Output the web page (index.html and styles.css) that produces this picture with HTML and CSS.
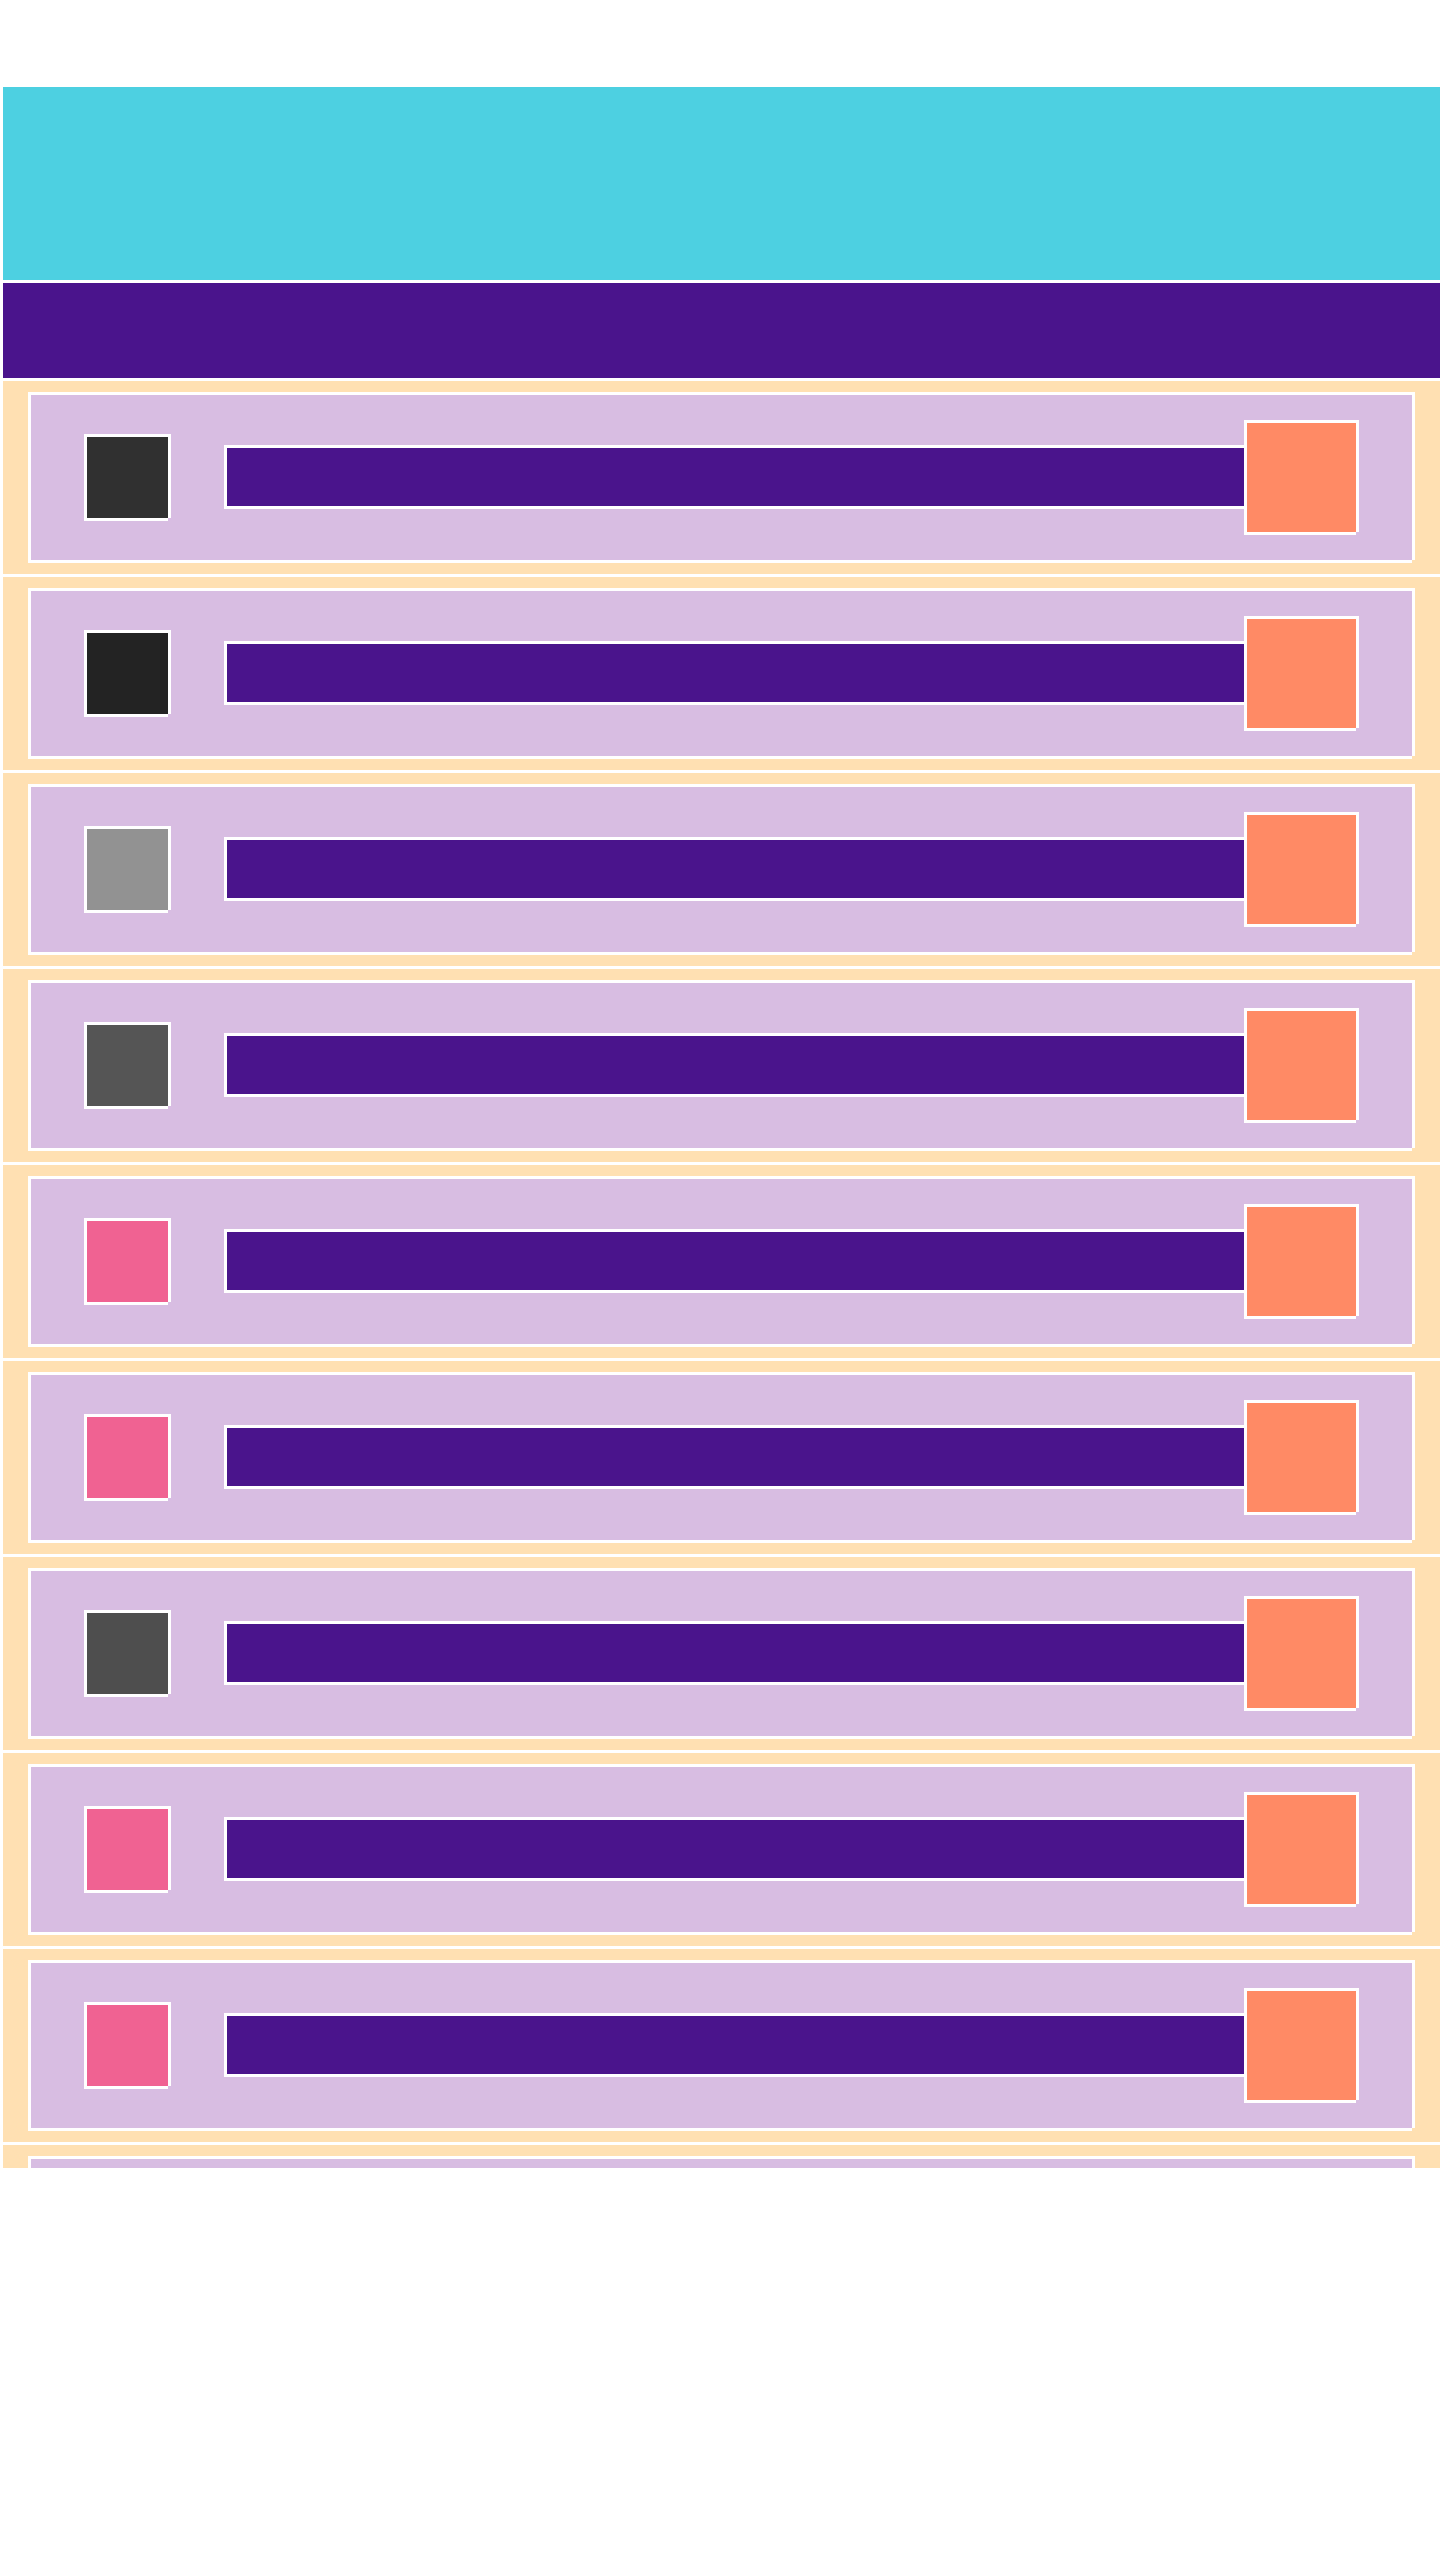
FILE: index.html
```html
<!DOCTYPE html>
<html lang="en">
<head>
    <meta charset="UTF-8">
    <meta name="viewport" content="width=device-width, initial-scale=1.0">
    <title>Swatch List</title>
    <link rel="stylesheet" href="styles.css">
</head>
<body>

    <div class="app">
        <header class="banner edge"></header>
        <nav class="toolbar edge"></nav>

        <ul class="list">
            <li class="row edge">
                <div class="card edge">
                    <span class="swatch edge tone-850"></span>
                    <span class="bar edge"></span>
                    <button class="action edge"></button>
                </div>
            </li>
            <li class="row edge">
                <div class="card edge">
                    <span class="swatch edge tone-900"></span>
                    <span class="bar edge"></span>
                    <button class="action edge"></button>
                </div>
            </li>
            <li class="row edge">
                <div class="card edge">
                    <span class="swatch edge tone-500"></span>
                    <span class="bar edge"></span>
                    <button class="action edge"></button>
                </div>
            </li>
            <li class="row edge">
                <div class="card edge">
                    <span class="swatch edge tone-700"></span>
                    <span class="bar edge"></span>
                    <button class="action edge"></button>
                </div>
            </li>
            <li class="row edge">
                <div class="card edge">
                    <span class="swatch edge tone-pink"></span>
                    <span class="bar edge"></span>
                    <button class="action edge"></button>
                </div>
            </li>
            <li class="row edge">
                <div class="card edge">
                    <span class="swatch edge tone-pink"></span>
                    <span class="bar edge"></span>
                    <button class="action edge"></button>
                </div>
            </li>
            <li class="row edge">
                <div class="card edge">
                    <span class="swatch edge tone-750"></span>
                    <span class="bar edge"></span>
                    <button class="action edge"></button>
                </div>
            </li>
            <li class="row edge">
                <div class="card edge">
                    <span class="swatch edge tone-pink"></span>
                    <span class="bar edge"></span>
                    <button class="action edge"></button>
                </div>
            </li>
            <li class="row edge">
                <div class="card edge">
                    <span class="swatch edge tone-pink"></span>
                    <span class="bar edge"></span>
                    <button class="action edge"></button>
                </div>
            </li>
            <li class="row edge">
                <div class="card edge">
                    <span class="swatch edge tone-850"></span>
                    <span class="bar edge"></span>
                    <button class="action edge"></button>
                </div>
            </li>
        </ul>
    </div>

</body>
</html>
```

FILE: styles.css
```css
body {
    margin: 0;
    background-color: #ffffff;
    font-family: "Liberation Sans", Arial, sans-serif;
}
.app {
    padding-top: 84px;
}

/* white frame on every block: top/left border, right/bottom drawn by shadow */
.edge {
    border-top: 3px solid #ffffff;
    border-left: 3px solid #ffffff;
    box-shadow: 3px 0 0 #ffffff, 0 3px 0 #ffffff;
}

.banner {
    display: block;
    height: 193px;
    background: #4dd0e1;
}
.toolbar {
    display: block;
    height: 95px;
    background: #4a148c;
}

.list {
    list-style: none;
    margin: 0;
    padding: 0;
    height: 1790px;
    overflow: hidden;
}
.row {
    display: block;
    padding: 11px 28px 14px 25px;
    background: #ffe0b2;
}
.card {
    display: flex;
    align-items: flex-start;
    height: 165px;
    padding: 0 56px 0 53px;
    background: #d8bde2;
}
.swatch {
    display: block;
    flex: none;
    width: 81px;
    height: 81px;
    margin-top: 39px;
    margin-right: 56px;
}
.bar {
    display: block;
    flex: 1;
    height: 58px;
    margin-top: 50px;
    background: #4a148c;
}
.action {
    flex: none;
    width: 112px;
    height: 112px;
    margin: 25px 0 0 0;
    padding: 0;
    border-right: none;
    border-bottom: none;
    background: #ff8a65;
    cursor: pointer;
}

.tone-900 { background: #232323; }
.tone-850 { background: #303030; }
.tone-750 { background: #4e4e4e; }
.tone-700 { background: #555555; }
.tone-500 { background: #929292; }
.tone-pink { background: #f06292; }
```
